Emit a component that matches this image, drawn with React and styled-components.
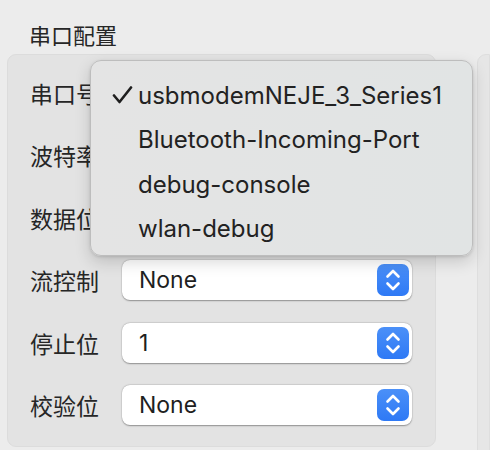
import React from 'react'
import styled, { createGlobalStyle } from 'styled-components'

const GlobalStyle = createGlobalStyle`
  html, body {
    margin: 0;
    padding: 0;
    background: #ececec;
  }
  body {
    font-family: Inter, "Noto Sans CJK SC", sans-serif;
    color: #222;
  }
`

const Page = styled.div`
  position: relative;
  width: 490px;
  height: 450px;
  overflow: hidden;
  display: flex;
  align-items: flex-start;
`

const Column = styled.div`
  width: 429px;
  margin-left: 7px;
  flex-shrink: 0;
`

const Title = styled.div`
  padding: 20px 0 0 22px;
  height: 34px;
  font-family: "Noto Sans CJK SC", sans-serif;
  font-size: 22px;
  line-height: 28px;
  color: #262626;
`

const GroupBox = styled.div`
  box-sizing: border-box;
  height: 393px;
  padding: 18px 23px 0 22px;
  background: #e3e3e3;
  border: 1px solid #dcdcdc;
  border-radius: 9px;
  display: flex;
  flex-direction: column;
  gap: 22.4px;
`

const Row = styled.div`
  display: flex;
  align-items: center;
  height: 40px;
`

const Label = styled.div`
  width: 92px;
  flex-shrink: 0;
  white-space: nowrap;
  font-family: "Noto Sans CJK SC", sans-serif;
  font-size: 23px;
  color: #262626;
`

const Select = styled.div`
  box-sizing: border-box;
  flex: 1;
  min-width: 0;
  height: 40px;
  display: flex;
  align-items: center;
  justify-content: space-between;
  padding: 0 3px 0 17px;
  background: #fff;
  border-radius: 8px;
  box-shadow: 0 0.5px 1.5px rgba(0, 0, 0, 0.35), 0 0 0 0.5px rgba(0, 0, 0, 0.06);
  font-size: 23px;
  color: #1f1f1f;
`

const Value = styled.span`
  overflow: hidden;
  white-space: nowrap;
  text-overflow: ellipsis;
`

const Stepper = styled.div`
  width: 32px;
  height: 32px;
  flex-shrink: 0;
  border-radius: 7px;
  background: linear-gradient(#4b90f8, #2e79f5);
  display: flex;
  align-items: center;
  justify-content: center;
`

const SidePanel = styled.div`
  margin: 54px 0 0 41px;
  flex: 1;
  height: 400px;
  background: #e6e6e6;
  border: 1px solid #dedede;
  border-radius: 9px 0 0 0;
`

const Menu = styled.div`
  position: absolute;
  left: 90px;
  top: 60px;
  box-sizing: border-box;
  width: 383px;
  height: 196px;
  padding: 12px 0 8px;
  background: linear-gradient(90deg, #e4e4e4, #e1e4e4);
  border: 1px solid #bdbdbd;
  border-radius: 11px;
  box-shadow: 0 6px 16px rgba(0, 0, 0, 0.16), 0 1px 3px rgba(0, 0, 0, 0.12);
`

const MenuItem = styled.div`
  height: 44.5px;
  display: flex;
  align-items: center;
  padding-left: 21px;
  font-size: 24px;
  color: #222;
  white-space: nowrap;
`

const Check = styled.span`
  width: 26px;
  display: flex;
  align-items: center;
`

function CheckMark() {
  return (
    <svg width="21" height="18" viewBox="0 0 21 18" fill="none">
      <path d="M2 9.5 L7.5 16 L19 1.5" stroke="#1e1e1e" strokeWidth="2.6" strokeLinecap="round" strokeLinejoin="round" />
    </svg>
  )
}

function Chevrons() {
  return (
    <svg width="32" height="32" viewBox="0 0 32 32" fill="none">
      <path d="M10.5 12.5 L16 7 L21.5 12.5" stroke="#fff" strokeWidth="2.6" strokeLinecap="round" strokeLinejoin="round" />
      <path d="M10.5 19.5 L16 25 L21.5 19.5" stroke="#fff" strokeWidth="2.6" strokeLinecap="round" strokeLinejoin="round" />
    </svg>
  )
}

const rows = [
  { label: '串口号', value: 'usbmodemNEJE_3_Series1' },
  { label: '波特率', value: '115200' },
  { label: '数据位', value: '8' },
  { label: '流控制', value: 'None' },
  { label: '停止位', value: '1' },
  { label: '校验位', value: 'None' },
]

const ports = ['usbmodemNEJE_3_Series1', 'Bluetooth-Incoming-Port', 'debug-console', 'wlan-debug']

export default function App() {
  return (
    <>
      <GlobalStyle />
      <Page>
        <Column>
          <Title>串口配置</Title>
          <GroupBox>
            {rows.map((row) => (
              <Row key={row.label}>
                <Label>{row.label}</Label>
                <Select>
                  <Value>{row.value}</Value>
                  <Stepper>
                    <Chevrons />
                  </Stepper>
                </Select>
              </Row>
            ))}
          </GroupBox>
        </Column>
        <SidePanel />
        <Menu>
          {ports.map((port, i) => (
            <MenuItem key={port}>
              <Check>{i === 0 && <CheckMark />}</Check>
              {port}
            </MenuItem>
          ))}
        </Menu>
      </Page>
    </>
  )
}
